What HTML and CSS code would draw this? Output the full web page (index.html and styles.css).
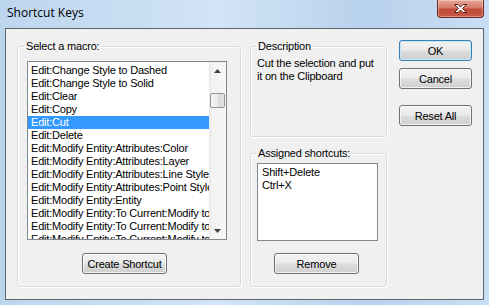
FILE: index.html
```html
<!DOCTYPE html>
<html lang="en">
<head>
  <meta charset="UTF-8" />
  <title>Shortcut Keys</title>
  <link rel="stylesheet" href="styles.css">
</head>
<body>
  <div class="ventana">
    <div class="barra-titulo">
      <span class="titulo">Shortcut Keys</span>
      <button class="cerrar" title="Close">
        <svg width="17" height="11" viewBox="0 0 17 11">
          <path d="M2.5 1.5 L6 1.5 L8.5 4 L11 1.5 L14.5 1.5 L10.5 5.5 L14.5 9.5 L11 9.5 L8.5 7 L6 9.5 L2.5 9.5 L6.5 5.5 Z" fill="#fff" stroke="#5e1f1a" stroke-width="1" stroke-linejoin="round"/>
        </svg>
      </button>
    </div>

    <div class="cliente">
      <fieldset class="grupo grupo-macro">
        <legend>Select a macro:</legend>
        <div class="lista lista-macros">
          <ul class="elementos">
            <li>Edit:Change Style to Dashed</li>
            <li>Edit:Change Style to Solid</li>
            <li>Edit:Clear</li>
            <li>Edit:Copy</li>
            <li class="seleccionado">Edit:Cut</li>
            <li>Edit:Delete</li>
            <li>Edit:Modify Entity:Attributes:Color</li>
            <li>Edit:Modify Entity:Attributes:Layer</li>
            <li>Edit:Modify Entity:Attributes:Line Style</li>
            <li>Edit:Modify Entity:Attributes:Point Style</li>
            <li>Edit:Modify Entity:Entity</li>
            <li>Edit:Modify Entity:To Current:Modify to Color</li>
            <li>Edit:Modify Entity:To Current:Modify to Layer</li>
            <li>Edit:Modify Entity:To Current:Modify to Line Style</li>
          </ul>
          <div class="scroll">
            <div class="flecha">
              <svg width="7" height="4" viewBox="0 0 7 4"><path d="M0 4 L3.5 0 L7 4 Z" fill="#404040"/></svg>
            </div>
            <div class="pulgar"></div>
            <div class="relleno"></div>
            <div class="flecha">
              <svg width="7" height="4" viewBox="0 0 7 4"><path d="M0 0 L7 0 L3.5 4 Z" fill="#404040"/></svg>
            </div>
          </div>
        </div>
        <button class="boton boton-crear">Create Shortcut</button>
      </fieldset>

      <div class="columna-media">
        <fieldset class="grupo grupo-descripcion">
          <legend>Description</legend>
          <p class="descripcion">Cut the selection and put it on the Clipboard</p>
        </fieldset>

        <fieldset class="grupo grupo-atajos">
          <legend>Assigned shortcuts:</legend>
          <ul class="lista lista-atajos">
            <li>Shift+Delete</li>
            <li>Ctrl+X</li>
          </ul>
          <button class="boton boton-quitar">Remove</button>
        </fieldset>
      </div>

      <div class="acciones">
        <button class="boton boton-ok">OK</button>
        <button class="boton boton-cancelar">Cancel</button>
        <button class="boton boton-reset">Reset All</button>
      </div>
    </div>
  </div>
</body>
</html>
```

FILE: styles.css
```css
* {
  box-sizing: border-box;
}

body {
  margin: 0;
  width: 489px;
  height: 305px;
  overflow: hidden;
  background: linear-gradient(to right, #bcd5ee, #d2e4f6 45%, #b8d1ec 75%, #c9def4);
  font-family: 'Liberation Sans', Arial, sans-serif;
  font-size: 11px;
  letter-spacing: -0.2px;
  color: #000;
}

.barra-titulo {
  height: 28px;
  display: flex;
  align-items: flex-start;
  justify-content: space-between;
}

.titulo {
  font-family: 'Open Sans', 'Noto Sans', sans-serif;
  font-size: 12px;
  letter-spacing: 0;
  margin: 5px 0 0 7px;
  line-height: 16px;
  color: #000;
}

.cerrar {
  width: 47px;
  height: 18px;
  margin-right: 5px;
  padding: 0;
  border: 1px solid #6e2a22;
  border-top: none;
  border-radius: 0 0 4px 4px;
  background: linear-gradient(#e9a898, #d6796a 45%, #c14a3a 55%, #c75a45);
  box-shadow: inset 0 0 0 1px rgba(255,255,255,0.35);
  display: flex;
  align-items: center;
  justify-content: center;
}

.cliente {
  margin-left: 5px;
  width: 479px;
  height: 272px;
  border: 1px solid #5d666f;
  background: #f0f0f0;
  display: flex;
  align-items: flex-start;
  padding: 11px 11px 0 11px;
}

/* grupos */
.grupo {
  margin: 0;
  border: 1px solid #d8dcdf;
  border-radius: 3px;
  min-width: 0;
  box-shadow: 1px 1px 0 #fff, inset 1px 1px 0 #fff;
}

.grupo legend {
  padding: 0 2px;
  line-height: 13px;
  height: 13px;
}

.grupo-macro {
  width: 224px;
  padding: 8px 13px 12px 9px;
}

.grupo-macro legend {
  margin-left: -3px;
}

.columna-media {
  width: 137px;
  margin-left: 9px;
  display: flex;
  flex-direction: column;
}

.grupo-descripcion {
  padding: 4px 6px 0 6px;
}

.grupo-descripcion legend,
.grupo-atajos legend {
  margin-left: -1px;
}

.descripcion {
  margin: 0;
  height: 79px;
  line-height: 13px;
}

.grupo-atajos {
  margin-top: 10px;
  padding: 3px 8px 12px 6px;
}

/* listas */
.lista {
  background: #fff;
  border: 1px solid #828790;
  margin: 0;
  list-style: none;
}

.lista-macros {
  width: 200px;
  height: 179px;
  display: flex;
}

.elementos {
  flex: 1;
  list-style: none;
  margin: 0;
  padding: 2px 0 0 0;
  overflow: hidden;
}

.elementos li {
  height: 13px;
  line-height: 13px;
  padding-left: 3px;
  white-space: nowrap;
}

.elementos li.seleccionado {
  background: #3399ff;
  color: #fff;
}

.scroll {
  width: 17px;
  display: flex;
  flex-direction: column;
  align-items: center;
  background: linear-gradient(to right, #e6e6e6, #f3f3f3 3px, #f7f7f7);
}

.flecha {
  height: 17px;
  display: flex;
  align-items: center;
  justify-content: center;
  flex-shrink: 0;
}

.pulgar {
  width: 15px;
  height: 15px;
  margin-top: 14px;
  border: 1px solid #979797;
  border-radius: 2px;
  background: linear-gradient(to right, #f4f4f4, #ebebeb 50%, #d9d9d9 55%, #e3e3e3);
}

.relleno {
  flex: 1;
}

.lista-atajos {
  width: 121px;
  height: 78px;
  padding: 2px 0 0 4px;
}

.lista-atajos li {
  line-height: 13px;
}

/* botones */
.boton {
  display: block;
  width: 85px;
  height: 21px;
  padding: 0;
  font-family: 'Liberation Sans', Arial, sans-serif;
  font-size: 11px;
  letter-spacing: -0.2px;
  color: #000;
  border: 1px solid #707070;
  border-radius: 3px;
  background: linear-gradient(#f2f2f2, #ebebeb 48%, #dddddd 52%, #cfcfcf);
  box-shadow: inset 0 0 0 1px rgba(255,255,255,0.7);
}

.boton-crear {
  margin: 13px 0 0 55px;
}

.boton-quitar {
  margin: 12px 0 0 17px;
}

.acciones {
  width: 73px;
  margin-left: 12px;
  display: flex;
  flex-direction: column;
}

.acciones .boton {
  width: 73px;
}

.boton-ok {
  border-color: #3c7fb1;
  box-shadow: inset 0 0 0 1px #c0e6f9;
}

.boton-cancelar {
  margin-top: 7px;
}

.boton-reset {
  margin-top: 16px;
}
```
